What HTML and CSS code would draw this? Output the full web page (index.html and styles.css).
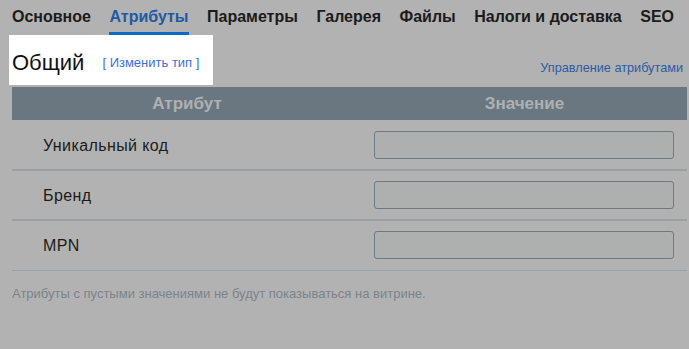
FILE: index.html
```html
<!DOCTYPE html>
<html lang="ru">
<head>
    <meta charset="UTF-8">
    <meta name="viewport" content="width=device-width, initial-scale=1.0">
    <title>Атрибуты товара</title>
    <link rel="stylesheet" href="styles.css">
</head>
<body>
    <div class="page">
        <nav class="tabs">
            <a class="tab">Основное</a>
            <a class="tab active">Атрибуты</a>
            <a class="tab">Параметры</a>
            <a class="tab">Галерея</a>
            <a class="tab">Файлы</a>
            <a class="tab">Налоги и доставка</a>
            <a class="tab">SEO</a>
        </nav>

        <div class="type-row">
            <div class="type-highlight">
                <h2 class="type-name">Общий</h2>
                <a class="change-type">[ Изменить тип ]</a>
            </div>
            <a class="manage-link">Управление атрибутами</a>
        </div>

        <table class="attr-table">
            <thead>
                <tr>
                    <th class="col-name">Атрибут</th>
                    <th class="col-value">Значение</th>
                </tr>
            </thead>
            <tbody>
                <tr>
                    <td class="attr-name">Уникальный код</td>
                    <td class="attr-value"><input type="text"></td>
                </tr>
                <tr>
                    <td class="attr-name">Бренд</td>
                    <td class="attr-value"><input type="text"></td>
                </tr>
                <tr class="last">
                    <td class="attr-name">MPN</td>
                    <td class="attr-value"><input type="text"></td>
                </tr>
            </tbody>
        </table>

        <p class="note">Атрибуты с пустыми значениями не будут показываться на витрине.</p>
    </div>
</body>
</html>
```

FILE: styles.css
```css
/* Reset */
* {
    margin: 0;
    padding: 0;
    box-sizing: border-box;
}

body {
    font-family: "Liberation Sans", Arial, sans-serif;
    background-color: #b2b2b2;
    color: #1b1b1b;
    height: 349px;
    overflow: hidden;
}

.page {
    padding: 0 2px 0 12px;
}

/* Tabs */
.tabs {
    display: flex;
    gap: 18.5px;
    height: 35px;
    padding-top: 6px;
}

.tab {
    font-size: 16px;
    font-weight: bold;
    color: #1b1b1b;
    height: 29px;
    line-height: 22px;
    white-space: nowrap;
}

.tab.active {
    color: #1f5aa3;
    border-bottom: 3px solid #0b6bc4;
}

/* Type row */
.type-row {
    display: flex;
    justify-content: space-between;
    align-items: center;
    height: 52px;
}

.type-highlight {
    display: flex;
    align-items: center;
    gap: 18px;
    background: #ffffff;
    margin-left: -3px;
    padding: 0 14px 0 3px;
    height: 50px;
    align-self: flex-start;
}

.type-name {
    font-size: 22px;
    font-weight: normal;
    color: #111;
    padding-top: 6px;
}

.change-type {
    font-size: 13px;
    color: #3d6fe0;
    padding-top: 4px;
}

.manage-link {
    font-size: 12.7px;
    color: #2c5ca5;
    padding-top: 14px;
    margin-right: 4px;
}

/* Table */
.attr-table {
    width: 675px;
    border-collapse: collapse;
}

.attr-table th {
    background-color: #6a7780;
    color: #adb1b3;
    font-size: 17px;
    font-weight: bold;
    height: 33px;
    text-align: center;
}

.col-name {
    width: 350px;
}

.attr-table td {
    height: 50px;
    border-bottom: 2px solid #9b9fa4;
    vertical-align: middle;
}

.attr-table tr.last td {
    border-bottom: 1px solid #9ca1a5;
}

.attr-name {
    font-size: 16px;
    letter-spacing: 0.4px;
    padding-left: 31px;
    padding-top: 2px;
    color: #1b1b1b;
}

.attr-value {
    padding: 0 13px 0 12px;
}

.attr-value input {
    width: 100%;
    height: 28px;
    border: 1px solid #6c7a84;
    border-radius: 3px;
    background-color: #aeb0af;
}

.note {
    font-size: 13px;
    color: #7a848b;
    margin-top: 15px;
}
```
